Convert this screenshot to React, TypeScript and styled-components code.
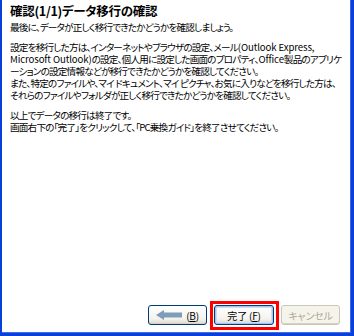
import React from "react";
import styled, { createGlobalStyle } from "styled-components";

const Global = createGlobalStyle`
  html, body { margin: 0; padding: 0; background: #ffffff; }
  #root { width: 354px; height: 336px; }
`;

const Frame = styled.div`
  box-sizing: border-box;
  width: 354px;
  height: 336px;
  background: #ffffff;
  border-left: 2px solid #0b3fd9;
  border-right: 3px solid #0b3fd9;
  border-bottom: 3px solid #0b3fd9;
  box-shadow: inset -1px -1px 0 #3d6cf0;
  display: flex;
  flex-direction: column;
  font-family: "Noto Sans CJK JP", "Noto Sans", sans-serif;
  font-feature-settings: "palt";
  color: #000;
`;

const Content = styled.div`
  flex: 1;
  padding: 3px 0 0 8px;
  display: flex;
  flex-direction: column;
`;

const Title = styled.h1`
  margin: 0 0 2px 0;
  font-size: 12.5px;
  font-weight: 700;
  line-height: 16px;
  letter-spacing: -0.3px;
  white-space: nowrap;
`;

const Paragraph = styled.p`
  margin: 0 0 8px 0;
  font-size: 9.6px;
  line-height: 12px;
  letter-spacing: -0.8px;
`;

const Line = styled.span`
  display: block;
  white-space: nowrap;
`;

const Latin = styled.span`
  letter-spacing: -0.1px;
`;

const Footer = styled.div`
  display: flex;
  justify-content: flex-end;
  align-items: center;
  gap: 7px;
  padding: 0 11px 8px 0;
`;

const Button = styled.button<{ $disabled?: boolean; $default?: boolean }>`
  box-sizing: border-box;
  width: ${(p) => (p.$default ? 60 : 59)}px;
  height: 20px;
  padding: 0;
  border-radius: 3px;
  border: 1px solid ${(p) => (p.$disabled ? "#c9c7ba" : "#003c74")};
  background: ${(p) =>
    p.$disabled ? "#f5f4ea" : "linear-gradient(#ffffff 0%, #f4f3ee 70%, #dcdad0 100%)"};
  box-shadow: ${(p) =>
    p.$default ? "inset 0 0 0 1px #a9c4ee, inset 0 0 0 2px #cfdcf5" : "inset 0 -1px 0 #d6d0c5"};
  color: ${(p) => (p.$disabled ? "#aca899" : "#000")};
  font-family: "Noto Sans CJK JP", "Noto Sans", sans-serif;
  font-feature-settings: "palt";
  font-size: 10px;
  letter-spacing: -0.2px;
  display: flex;
  align-items: center;
  justify-content: center;
  gap: 4px;
  position: relative;
`;

const Key = styled.span`
  text-decoration: underline;
`;

const Highlight = styled.span`
  position: absolute;
  left: -5px;
  top: -5px;
  right: -6px;
  bottom: -6px;
  border: 3.5px solid #ff0000;
  pointer-events: none;
`;

const BackArrow = () => (
  <svg width="26" height="10" viewBox="0 0 26 10">
    <path d="M0 5 L8 0 L8 2.5 L26 2.5 L26 7.5 L8 7.5 L8 10 Z" fill="#7f9db9" />
  </svg>
);

export default function App() {
  return (
    <>
      <Global />
      <Frame>
        <Content>
          <Title>確認(1/1)データ移行の確認</Title>
          <Paragraph>
            <Line>最後に、データが正しく移行できたかどうかを確認しましょう。</Line>
          </Paragraph>
          <Paragraph>
            <Line>
              設定を移行した方は、インターネットやブラウザの設定、メール<Latin>(Outlook Express,</Latin>
            </Line>
            <Line>
              <Latin>Microsoft Outlook)</Latin>の設定、個人用に設定した画面のプロパティ、<Latin>Office</Latin>製品のアプリケ
            </Line>
            <Line>ーションの設定情報などが移行できたかどうかを確認してください。</Line>
            <Line>また、特定のファイルや、マイ ドキュメント、マイ ピクチャ、お気に入りなどを移行した方は、</Line>
            <Line>それらのファイルやフォルダが正しく移行できたかどうかを確認してください。</Line>
          </Paragraph>
          <Paragraph>
            <Line>以上でデータの移行は終了です。</Line>
            <Line>画面右下の「完了」をクリックして、「PC乗換ガイド」を終了させてください。</Line>
          </Paragraph>
        </Content>
        <Footer>
          <Button>
            <BackArrow />
            <span>
              (<Key>B</Key>)
            </span>
          </Button>
          <Button $default>
            <span>
              完了 (<Key>F</Key>)
            </span>
            <Highlight />
          </Button>
          <Button $disabled disabled>
            キャンセル
          </Button>
        </Footer>
      </Frame>
    </>
  );
}
